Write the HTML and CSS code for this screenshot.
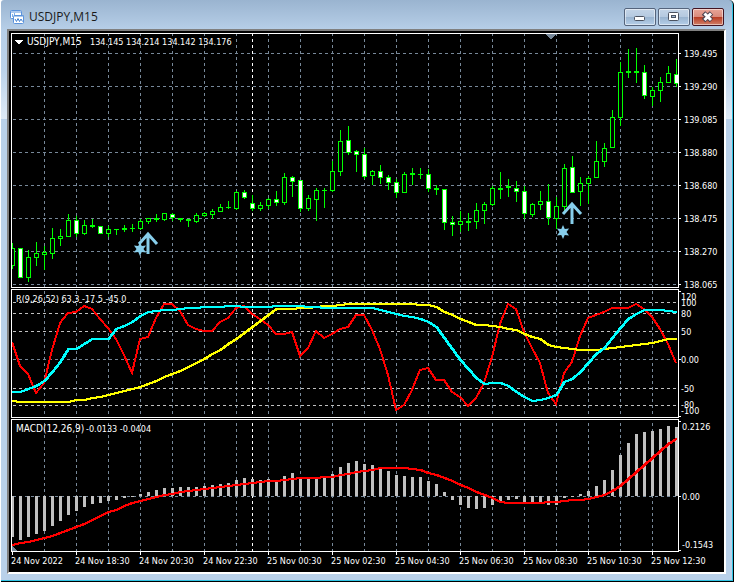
FILE: index.html
```html
<!DOCTYPE html>
<html lang="en">
<head>
    <meta charset="UTF-8">
    <meta name="viewport" content="width=device-width, initial-scale=1.0">
    <title>USDJPY,M15</title>
    <link rel="stylesheet" href="styles.css">
</head>
<body>
    <div class="window">
        <header class="titlebar">
            <svg class="app-icon" width="15" height="15" viewBox="0 0 15 15">
                <rect x="0.5" y="0.5" width="11" height="8" rx="1" fill="#fff" stroke="#5b93dc"/>
                <path d="M1 2h10" stroke="#5b93dc" stroke-width="1"/>
                <path d="M2.500 7V4M4.500 6V3" stroke="#7fb0ea"/>
                <rect x="3.5" y="5.5" width="10" height="8" rx="1" fill="#fff" stroke="#5b93dc"/>
                <path d="M4 6h10" stroke="#5b93dc"/>
                <path d="M5 9l1.500 2.500L8 8.500l1.500 3L11 9l1.500 2.500" fill="none" stroke="#3f7fd0"/>
            </svg>
            <h1 class="title">USDJPY,M15</h1>
            <div class="buttons">
                <button class="win-btn" type="button" aria-label="Minimize">
                    <svg width="30" height="16" viewBox="0 0 30 16">
                        <rect x="9.500" y="7.500" width="10" height="4" rx="1" fill="#fff" stroke="#4b5260"/>
                    </svg>
                </button>
                <button class="win-btn" type="button" aria-label="Maximize">
                    <svg width="30" height="16" viewBox="0 0 30 16">
                        <rect x="9.500" y="3.500" width="10" height="8" rx="1" fill="#fff" stroke="#4b5260"/>
                        <rect x="12.500" y="6.500" width="4" height="2" fill="#9db6d2" stroke="#4b5260"/>
                    </svg>
                </button>
                <button class="win-btn close" type="button" aria-label="Close">
                    <svg width="30" height="16" viewBox="0 0 30 16">
                        <path d="M10.500 4L18.500 11.500M18.500 4L10.500 11.500" stroke="#4d4450" stroke-width="5"/>
                        <path d="M11.500 4.500L18 11M18 4.500L11.500 11" stroke="#fff" stroke-width="3"/>
                    </svg>
                </button>
            </div>
        </header>
        <main class="client">
            <svg class="chart" id="chart" viewBox="9 31 715 541"></svg>
        </main>
    </div>
    <script src="chart.js"></script>
</body>
</html>
```
FILE: styles.css
```css
body {
    margin: 0;
    background-color: #fff;
}
.window {
    margin: 0 2px 0 1px;
    padding: 0 7px 7px 6px;
    border-right: 1px solid #000;
    border-bottom: 1px solid #000;
    border-radius: 3px 5px 0 0;
    box-shadow: inset -1px -1px 0 #30c4e4;
    background: linear-gradient(#9ab4d0 0, #b7cfe8 30px, #bcd3eb 70px, #dfebf7 119px, #b9d1ea 119px);
}
.titlebar {
    display: flex;
    align-items: center;
    height: 29px;
    padding: 5px 2px 0 3px;
    box-sizing: border-box;
}
.app-icon {
    margin-right: 4px;
}
.title {
    flex: 1;
    margin: 0;
    font-family: "Open Sans", "Noto Sans", sans-serif;
    font-size: 12px;
    font-weight: normal;
    line-height: 18px;
    color: #1a1a1a;
}
.buttons {
    display: flex;
    gap: 2px;
}
.win-btn {
    width: 32px;
    height: 18px;
    padding: 0;
    border: 1px solid #55647c;
    border-radius: 2px;
    background: linear-gradient(#c3d4e7 0, #b4c9e0 50%, #98b3cf 50%, #b5cee8 100%);
    box-shadow: inset 0 0 0 1px rgba(255, 255, 255, 0.5);
}
.win-btn svg {
    display: block;
}
.close {
    border-color: #431422;
    background: linear-gradient(#e8a598 0, #d98a7c 50%, #b83a22 50%, #d08068 100%);
}
.client {
    border: 2px solid #808080;
    border-right-color: #fff;
    border-bottom-color: #fff;
    background-color: #000;
}
.chart {
    display: block;
    width: 100%;
    height: auto;
    font-family: "DejaVu Sans Condensed", "DejaVu Sans", sans-serif;
    font-size: 9px;
    shape-rendering: crispEdges;
}
.chart text {
    fill: #fff;
}
.chart .name {
    font-size: 10px;
}
.grid {
    stroke: #778899;
    stroke-dasharray: 3 3;
}
.level {
    stroke: #c0c0c0;
    stroke-dasharray: 3 3;
}
.day {
    stroke: #fff;
    stroke-dasharray: 3 3;
}
.frame {
    fill: none;
    stroke: #fff;
}
.candle {
    fill: #000;
    stroke: #00ff00;
}
.candle.bear {
    fill: #fff;
}
.histogram {
    fill: #c0c0c0;
}
.line {
    fill: none;
    stroke-width: 2;
}
.red {
    stroke: #ff0000;
}
.aqua {
    stroke: #00ffff;
}
.yellow {
    stroke: #ffff00;
}
.marker {
    fill: #778899;
}
.arrow {
    fill: none;
    stroke: #87ceeb;
    stroke-width: 3;
    shape-rendering: auto;
}
.star {
    fill: #87ceeb;
    shape-rendering: auto;
}
```
FILE: chart.js
```js
const chart = document.getElementById('chart');
const LEFT = 11;
const RIGHT = 678;
const STEP = 8;
const ZERO = 496;

// high, open/close top, open/close bottom, low, bearish
const candles = [
    [243,248,265,268,0],[248,248,277,277,1],[250,257,277,281,0],[242,253,257,265,0],
    [246,252,254,269,0],[228,238,253,258,0],[229,236,238,245,0],[214,220,236,236,0],
    [216,220,233,236,1],[220,225,233,234,0],[219,225,226,227,0],[226,226,233,233,1],
    [226,229,233,236,0],[229,229,229,234,0],[225,228,229,231,0],[224,228,228,231,0],
    [219,221,228,229,0],[218,218,221,223,0],[214,218,219,221,0],[213,213,219,220,0],
    [213,214,217,220,1],[218,218,219,221,0],[219,219,220,226,0],[213,215,221,222,0],
    [212,213,215,216,0],[209,211,214,218,0],[204,207,211,211,0],[201,207,207,208,0],
    [191,192,208,209,0],[190,192,197,198,1],[195,203,208,210,1],[202,205,208,210,0],
    [198,199,205,208,0],[191,199,202,205,1],[173,177,202,204,0],[176,177,181,196,1],
    [180,180,208,211,1],[195,198,208,210,0],[188,190,199,220,0],[188,190,190,207,0],
    [161,171,190,191,0],[130,141,171,175,0],[126,140,152,154,1],[150,151,154,171,1],
    [148,154,176,178,1],[170,171,175,184,0],[165,171,177,183,1],[175,177,182,189,1],
    [179,182,192,197,1],[172,174,192,192,0],[168,173,174,184,0],[168,174,174,178,0],
    [169,174,188,191,1],[185,188,189,194,0],[189,189,222,229,1],[216,222,224,235,1],
    [211,221,224,231,0],[213,221,222,230,0],[203,210,221,228,0],[202,204,210,223,0],
    [186,188,204,205,0],[172,188,189,198,0],[179,186,187,196,0],[181,188,191,201,1],
    [186,191,213,218,1],[203,204,214,216,0],[191,201,204,209,0],[184,201,217,224,1],
    [197,206,218,228,0],[164,168,206,211,0],[156,167,192,192,1],[177,183,191,205,0],
    [176,178,183,203,0],[141,161,177,177,0],[143,148,161,166,0],[110,117,147,147,0],
    [62,72,117,125,0],[49,71,72,77,0],[48,71,72,82,0],[65,72,95,98,1],
    [87,90,96,105,0],[77,82,90,101,0],[66,73,82,82,0],[59,74,83,86,1]
];

const fast = [342,366,374,393,383,350,323,313,312,306,309,319,328,339,355,373,339,337,318,304,
    304,311,325,329,331,331,322,318,308,306,314,319,325,334,334,332,356,348,331,338,
    334,329,327,315,315,330,349,375,410,405,390,370,368,380,380,392,397,406,398,383,
    357,324,304,309,332,348,363,393,404,373,362,336,318,315,312,308,308,308,304,309,
    317,329,344,363];
const medium = [392,392,389,386,381,372,362,349,349,344,339,339,339,329,326,322,316,312,311,310,
    310,309,308,308,307,307,307,306,306,307,307,307,307,306,306,306,306,307,307,308,
    308,308,308,308,308,308,310,312,314,316,317,319,322,327,338,349,360,369,378,384,
    383,383,386,392,397,401,400,398,395,382,379,372,363,354,348,338,328,319,314,310,
    310,310,311,312];
const slow = [401,402,402,402,402,402,402,402,400,400,398,397,395,393,391,389,387,384,381,377,
    374,371,367,363,359,354,350,344,339,333,327,321,315,309,309,309,308,308,307,306,
    306,305,304,304,304,304,304,304,304,304,304,305,305,307,312,315,319,322,325,325,
    326,327,329,330,334,337,339,345,347,348,349,350,350,350,349,348,347,346,345,344,
    343,341,339,339];
const macd = [537,540,537,534,531,526,521,515,511,507,504,503,501,500,498,497,494,492,490,488,
    488,487,487,487,486,485,484,483,480,478,479,480,479,481,476,473,477,478,478,478,
    474,467,463,461,464,465,469,471,475,476,477,477,481,484,492,500,505,508,509,508,
    505,501,500,499,503,503,503,505,505,498,497,494,491,486,480,470,455,443,434,432,
    431,429,426,427];
const signal = [545,543,542,540,538,536,533,530,527,524,520,516,512,510,506,503,501,499,497,495,
    494,492,491,490,489,488,487,486,485,484,483,482,481,481,480,479,478,478,478,477,
    477,475,474,472,471,470,468,468,468,468,469,470,473,475,478,481,485,488,492,495,
    498,502,503,503,503,503,503,502,502,501,500,500,499,497,495,491,486,479,472,465,
    458,451,444,439];

let out = '';

function hline(y, cls) {
    out += `<path class="${cls}" d="M13 ${y + 0.5}H${RIGHT}"/>`;
}

function vline(x, cls, top, bottom) {
    out += `<path class="${cls}" d="M${x + 0.5} ${top}V${bottom}"/>`;
}

function text(x, y, value, cls = 'value') {
    out += `<text class="${cls}" x="${x}" y="${y}">${value}</text>`;
}

function tick(y) {
    out += `<path class="frame" d="M${RIGHT} ${y + 0.5}h3"/>`;
}

// each shift draws the line once more, like a wider pen
function series(values, cls, shifts = [0, 1]) {
    shifts.forEach(shift => {
        const points = values.map((y, i) => `${LEFT + 1 + shift + i * STEP},${y}`).join(' ');
        out += `<polyline class="line ${cls}" points="${points}"/>`;
    });
}

function drawGrid() {
    [[33, 287], [291, 417], [423, 551]].forEach(([top, bottom]) => {
        for (let x = 44; x < RIGHT; x += 32) {
            vline(x, 'grid', top, bottom);
        }
        vline(252, 'day', top, bottom);
    });
    for (let y = 53; y < 287; y += 33) {
        hline(y, 'grid');
    }
    [302, 313, 331, 388, 405].forEach(y => hline(y, 'level'));
    hline(359, 'grid');
    hline(ZERO, 'grid');
}

function drawCandles() {
    candles.forEach(([high, top, bottom, low, bear], i) => {
        const x = LEFT + 1 + i * STEP;
        const cls = bear ? 'candle bear' : 'candle';
        out += `<path class="candle" d="M${x + 0.5} ${high}V${low + 1}"/>`;
        if (top === bottom) {
            out += `<path class="candle" d="M${x - 2} ${top + 0.5}h5"/>`;
        } else {
            out += `<rect class="${cls}" x="${x - 1.5}" y="${top + 0.5}" width="4" height="${bottom - top}"/>`;
        }
    });
}

function drawHistogram() {
    macd.forEach((y, i) => {
        const x = LEFT + i * STEP;
        const top = Math.min(y, ZERO);
        out += `<rect class="histogram" x="${x}" y="${top}" width="3" height="${Math.abs(ZERO - y)}"/>`;
    });
}

function drawSignalMark(x, y, starX, starY) {
    out += `<path class="arrow" d="M${x} ${y + 22}V${y + 2}M${x - 9} ${y + 12}L${x} ${y + 2}l9 10"/>`;
    let points = '';
    for (let i = 0; i < 12; i++) {
        const r = i % 2 ? 3.5 : 7;
        const a = i * Math.PI / 6;
        points += `${starX + r * Math.sin(a)},${starY - r * Math.cos(a)} `;
    }
    out += `<polygon class="star" points="${points}"/>`;
}

function drawFrames() {
    [[33, 287], [289, 417], [419, 551]].forEach(([top, bottom]) => {
        out += `<rect class="frame" x="${LEFT + 0.5}" y="${top + 0.5}" width="${RIGHT - LEFT}" height="${bottom - top}"/>`;
    });
}

function drawLabels() {
    const prices = ['139.495', '139.290', '139.085', '138.880', '138.680', '138.475', '138.270', '138.065'];
    prices.forEach((price, i) => {
        tick(53 + i * 33);
        text(684, 57 + i * 33, price);
    });

    [['120', 300], ['100', 306], ['80', 317], ['50', 335], ['0.00', 363],
        ['-50', 392], ['-80', 408], ['-100', 414]].forEach(([value, y]) => text(681, y, value));
    [['0.2126', 430], ['0.00', 500], ['-0.1543', 548]].forEach(([value, y]) => text(682, y, value));
    [291, 359, 416, 421, ZERO, 550].forEach(tick);

    const times = ['24 Nov 2022', '24 Nov 18:30', '24 Nov 20:30', '24 Nov 22:30', '25 Nov 00:30',
        '25 Nov 02:30', '25 Nov 04:30', '25 Nov 06:30', '25 Nov 08:30', '25 Nov 10:30', '25 Nov 12:30'];
    times.forEach((time, i) => {
        const x = 12 + i * 64;
        out += `<path class="frame" d="M${x + 0.5} 551v4"/>`;
        text(x - 1, 564, time);
    });

    text(27, 45, 'USDJPY,M15', 'name');
    text(90, 45, '134.145 134.214 134.142 134.176');
    text(16, 302, 'R(9,26,52) 63.3 -17.5 -45.0');
    text(16, 432, 'MACD(12,26,9)', 'name');
    text(86, 432, '-0.0133 -0.0404');
}

out += '<clipPath id="plot"><rect x="12" y="31" width="666" height="541"/></clipPath><g clip-path="url(#plot)">';
drawGrid();
drawCandles();
drawSignalMark(148, 232, 140, 249);
drawSignalMark(572, 202, 563, 232);
series(fast, 'red', [0]);
series(slow, 'yellow');
series(medium, 'aqua');
drawHistogram();
series(signal, 'red');
out += '<path class="marker" d="M545 34h11l-5 5h-1zM12 546l6 5h-6z"/></g>';
drawFrames();
drawLabels();
out += '<path d="M14 40h9l-4 4h-1z" fill="#fff"/>';
chart.innerHTML = out;
```
